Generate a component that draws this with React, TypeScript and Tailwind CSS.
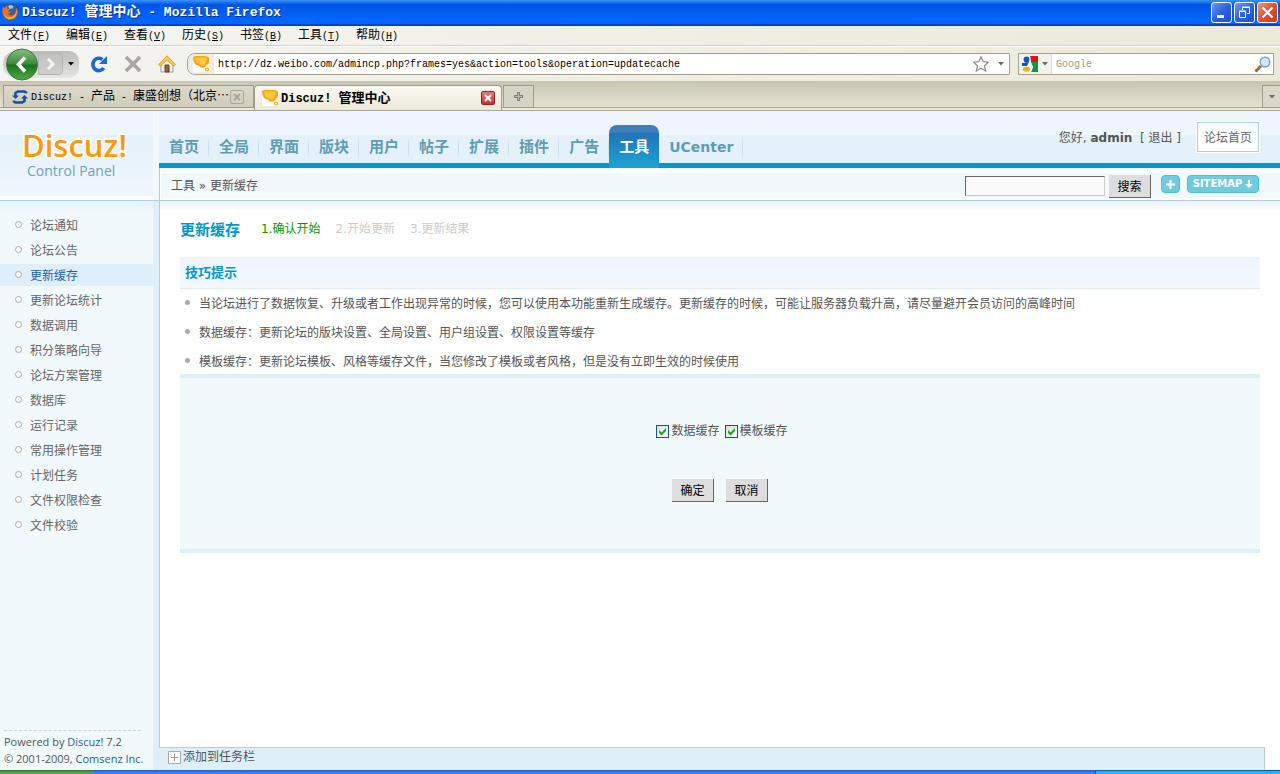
import { clsx } from 'clsx';

const menus = [
  ['文件', 'F'],
  ['编辑', 'E'],
  ['查看', 'V'],
  ['历史', 'S'],
  ['书签', 'B'],
  ['工具', 'T'],
  ['帮助', 'H'],
];

const navItems = ['首页', '全局', '界面', '版块', '用户', '帖子', '扩展', '插件', '广告', '工具', 'UCenter'];

const sideItems = [
  '论坛通知',
  '论坛公告',
  '更新缓存',
  '更新论坛统计',
  '数据调用',
  '积分策略向导',
  '论坛方案管理',
  '数据库',
  '运行记录',
  '常用操作管理',
  '计划任务',
  '文件权限检查',
  '文件校验',
];

const tips = [
  '当论坛进行了数据恢复、升级或者工作出现异常的时候，您可以使用本功能重新生成缓存。更新缓存的时候，可能让服务器负载升高，请尽量避开会员访问的高峰时间',
  '数据缓存：更新论坛的版块设置、全局设置、用户组设置、权限设置等缓存',
  '模板缓存：更新论坛模板、风格等缓存文件，当您修改了模板或者风格，但是没有立即生效的时候使用',
];

function FirefoxIcon() {
  return (
    <svg width="16" height="16" viewBox="0 0 16 16" className="shrink-0">
      <circle cx="8" cy="8" r="7.5" fill="#b8450a" />
      <circle cx="8.5" cy="6" r="5.500" fill="#35619f" />
      <path d="M6 2l3-1 2.500 1.500-1 2-3 .5z" fill="#9cc6e8" />
      <path d="M1 1.500c0 2-.7 4-.5 6.500C1 13 4.500 15.700 8 15.700c4.500 0 7.500-3.200 7.600-7.500 0-2-.6-3.700-1.600-5 .6 4-.5 7-3 8-2.500.8-4.500-.3-5-2 1.200.4 2 0 3-.8-1.600 0-2.600-.8-2.800-1.800.8-.3 1.800-.5 2-1.200C7.500 5 6 5 5.300 4.500 5 3.700 5.200 3 5.500 2.200 4 2.500 3.300 3 2.700 4 1.500 3.800 1.200 3 1 1.500z" fill="#ec7413" />
      <path d="M14 5c.8 5-2 8.500-6.500 8.500C5 13.500 3 12 2 10c1 3.500 3.500 5 6.500 4.800C13 14.500 15.500 10 14 5z" fill="#fbc62c" />
    </svg>
  );
}

// speech bubble favicon of the forum
function BubbleIcon() {
  return (
    <svg width="16" height="16" viewBox="0 0 16 16" className="shrink-0">
      <rect width="16" height="16" fill="#fff" />
      <path d="M0 1q2-1.500 4-1h8q3 0 4 1.500v4q0 2.500-2 3-1 3-4 3.200Q7 12 6 9.500 3 9.500 1.500 7 0 5 0 1z" fill="#fda60b" />
      <path d="M2 1.500h11.500q.8 3-1 5-1 3.500-3.500 3Q6.500 7 4.500 7 2 5 2 1.500z" fill="#ffc647" />
      <circle cx="14" cy="13.500" r="1.500" fill="#fff" stroke="#fda60b" strokeWidth="1.200" />
    </svg>
  );
}

function Caret({ className = 'text-[#6d6b66]' }: { className?: string }) {
  return (
    <svg width="6" height="4" viewBox="0 0 6 4" className={clsx('shrink-0', className)}>
      <path d="M0 0h6L3 3.500z" fill="currentColor" />
    </svg>
  );
}

function TitleBar() {
  return (
    <div className="flex h-[26px] items-center bg-linear-to-b from-[#3a93ff] via-[#0054e3] via-20% to-[#0066ff] to-80% pl-[2px] pr-[2px] border-b-2 border-[#0043cf]">
      <FirefoxIcon />
      <h1 className="ml-[4px] flex items-baseline font-['Liberation_Mono','Noto_Sans_CJK_SC',monospace] text-[13px] leading-5 font-bold whitespace-pre text-white [text-shadow:1px_1px_#0a2a8c]">
        Discuz! <span className="text-sm leading-5">管理中心</span> - Mozilla Firefox
      </h1>
      <div className="ml-auto flex gap-[2px]">
        <button aria-label="Minimize" className="flex size-[21px] items-center justify-center rounded-[3px] border border-white bg-linear-to-br from-[#6a9bf5] via-[#2b62e0] to-[#1a4fd0]">
          <svg width="15" height="15" viewBox="0 0 15 15">
            <path d="M3 10h7v3H3z" fill="#fff" />
          </svg>
        </button>
        <button aria-label="Restore" className="flex size-[21px] items-center justify-center rounded-[3px] border border-white bg-linear-to-br from-[#6a9bf5] via-[#2b62e0] to-[#1a4fd0]">
          <svg width="15" height="15" viewBox="0 0 15 15" fill="none" stroke="#fff">
            <path d="M5.500 5V2.500h7v6H10M5 2h8M2.500 6.500h6v6h-6zM2 6h7" />
          </svg>
        </button>
        <button aria-label="Close" className="flex size-[21px] items-center justify-center rounded-[3px] border border-white bg-linear-to-br from-[#f0907a] via-[#e0512f] to-[#c83a10]">
          <svg width="15" height="15" viewBox="0 0 15 15">
            <path d="M2.500 2.500l10 10M12.500 2.500l-10 10" stroke="#fff" strokeWidth="2" />
          </svg>
        </button>
      </div>
    </div>
  );
}

function MenuBar() {
  return (
    <nav className="flex h-[21px] items-start border-b border-white bg-linear-to-r from-[#f5f5f3] to-[#ece9d8] shadow-[inset_0_-1px_#d6d2bf]">
      {menus.map(([label, key]) => (
        <button key={key} className="flex w-[58px] items-baseline pl-2 text-xs leading-[18px] text-black">
          {label}
          <span className="font-['Liberation_Mono',monospace] text-[10px]">
            (<u>{key}</u>)
          </span>
        </button>
      ))}
    </nav>
  );
}

function ToolBar() {
  return (
    <div className="flex h-[34px] items-center bg-linear-to-r from-[#f4f4f1] to-[#ece9d8] pl-[3px] pr-[6px]">
      <div className="flex h-[27px] w-[76px] items-center rounded-l-[13px] rounded-r-[10px] bg-linear-to-b from-[#bdbdbb] to-[#e6e6e3]">
        <button aria-label="Back" className="shrink-0">
          <svg width="35" height="33" viewBox="0 0 35 33" className="-my-1">
            <defs>
              <linearGradient id="back" x1="0" y1="0" x2="0" y2="1">
                <stop offset="0" stopColor="#8bbd86" />
                <stop offset=".48" stopColor="#3d8a3b" />
                <stop offset=".52" stopColor="#1c6f1d" />
                <stop offset="1" stopColor="#4fae49" />
              </linearGradient>
            </defs>
            <circle cx="19" cy="16.500" r="15.500" fill="url(#back)" stroke="#3e7740" />
            <path d="M22 9.500l-6.500 7 6.500 7" fill="none" stroke="#fff" strokeWidth="3.500" />
          </svg>
        </button>
        <button aria-label="Forward" className="flex h-[22px] w-[25px] shrink-0 items-center justify-center rounded-r border border-[#b5b5b2] bg-linear-to-b from-[#c2c2bf] to-[#cfcfcc]">
          <svg width="10" height="12" viewBox="0 0 10 12">
            <path d="M2 1l5 5-5 5" fill="none" stroke="#f4f4f2" strokeWidth="3" />
          </svg>
        </button>
        <button aria-label="Recent pages" className="ml-[5px]">
          <Caret className="text-black" />
        </button>
      </div>
      <button aria-label="Reload" className="ml-[11px]">
        <svg width="18" height="18" viewBox="0 0 18 18">
          <path d="M13.800 13A6 6.200 0 1 1 12.500 4.500" fill="none" stroke="#1f66d6" strokeWidth="3.600" />
          <path d="M17 1v8H9z" fill="#1f66d6" />
        </svg>
      </button>
      <button aria-label="Stop" className="ml-4">
        <svg width="18" height="18" viewBox="0 0 18 18">
          <path d="M2 2l14 14M16 2L2 16" stroke="#a6a6a3" strokeWidth="3.600" />
        </svg>
      </button>
      <button aria-label="Home" className="ml-4">
        <svg width="18" height="18" viewBox="0 0 18 18">
          <path d="M3 9l6-6 6 6v8H3z" fill="#eef1f6" stroke="#9a9a98" />
          <path d="M7 10h4v7H7z" fill="#a0602c" stroke="#6b431f" />
          <path d="M9 .8L.6 9.500 2.200 11 9 5.200l6.800 5.800 1.600-1.500z" fill="#fdcb3e" stroke="#cf921c" strokeWidth=".8" />
        </svg>
      </button>
      <div className="ml-[11px] flex h-[22px] min-w-0 flex-1 items-center rounded-l-lg border border-[#a5a191] bg-white pr-[5px]">
        <span className="mr-1 flex h-full w-[26px] items-center justify-center rounded-l-lg bg-[#efeee6]">
          <BubbleIcon />
        </span>
        <input
          aria-label="Location"
          defaultValue="http://dz.weibo.com/admincp.php?frames=yes&action=tools&operation=updatecache"
          className="min-w-0 flex-1 bg-transparent font-['Liberation_Mono',monospace] text-[10px] text-black outline-none"
        />
        <button aria-label="Bookmark this page">
          <svg width="16" height="16" viewBox="0 0 16 16">
            <path d="M8 .8l2.200 4.900 5.200.5-3.900 3.500 1.200 5.300L8 12.300 3.300 15l1.200-5.300L.6 6.200l5.200-.5z" fill="#fff" stroke="#8d8d8b" strokeWidth="1.200" />
          </svg>
        </button>
        <button aria-label="Show history" className="ml-[9px]">
          <Caret />
        </button>
      </div>
      <div className="ml-2 flex h-[22px] w-[256px] items-center border border-[#a5a191] bg-white pr-[2px]">
        <button aria-label="Search engine" className="flex h-full w-[33px] items-center gap-1 border-r border-[#e1ded0] bg-[#f2f1ea] pl-[3px]">
          <svg width="16" height="16" viewBox="0 0 16 16" className="shrink-0">
            <path d="M8 0h8v6H9z" fill="#e11313" />
            <path d="M9 6h7v10H9l2-5z" fill="#109447" />
            <path d="M0 0h8l1 7 2 4-2 5H0z" fill="#fff" />
            <circle cx="4.500" cy="3.500" r="3" fill="#1555c0" />
            <path d="M0 7l7-1-2 4H0z" fill="#1555c0" />
            <ellipse cx="4.500" cy="13.200" rx="3.800" ry="2.500" fill="#f5ae14" />
          </svg>
          <Caret />
        </button>
        <input
          aria-label="Search the web"
          placeholder="Google"
          className="min-w-0 flex-1 pl-1 font-['Liberation_Mono',monospace] text-[10px] outline-none placeholder:text-[#9c9885]"
        />
        <button aria-label="Search">
          <svg width="17" height="17" viewBox="0 0 17 17">
            <path d="M7 10l-5.500 5.500" stroke="#b0622b" strokeWidth="2.800" />
            <circle cx="11" cy="6" r="4.800" fill="#cfe8fb" stroke="#7c9dc4" strokeWidth="1.400" />
          </svg>
        </button>
      </div>
    </div>
  );
}

function TabStrip() {
  return (
    <div className="flex h-[30px] border-b border-[#aca899] bg-linear-to-b from-[#c8c5b3] to-[#e8e5d6] pt-1 pl-[3px] shadow-[inset_0_-2px_#ece9d8,inset_0_-3px_#aca899]">
      <button className="flex h-[23px] w-[251px] items-center border border-[#a09d8c] bg-linear-to-b from-[#dcd9ca] to-[#d0cdbc] pl-2 text-xs text-black">
        <svg width="16" height="16" viewBox="0 0 16 16" className="shrink-0">
          <path d="M14 4.500V3.500L12.500 2.500H6L3.500 4v3" fill="none" stroke="#1650a5" strokeWidth="2.600" />
          <path d="M0 6.500h7L3.500 10z" fill="#1650a5" />
          <path d="M2 11.500v1l1.500 1H10l2.500-1.500V9" fill="none" stroke="#1650a5" strokeWidth="2.600" />
          <path d="M9 9.500h7L12.500 6z" fill="#1650a5" />
        </svg>
        <span className="ml-[3px] flex items-baseline font-['Noto_Sans_CJK_SC',sans-serif] leading-5 whitespace-pre">
          <span className="font-['Liberation_Mono',monospace] text-[10px]">Discuz! - </span>
          产品
          <span className="font-['Liberation_Mono',monospace] text-[10px]"> - </span>
          康盛创想（北京…
        </span>
        <span className="ml-px flex size-[14px] shrink-0 items-center justify-center rounded-xs border border-[#a9a79c]">
          <svg width="8" height="8" viewBox="0 0 8 8">
            <path d="M1 1l6 6M7 1L1 7" stroke="#a9a79c" strokeWidth="2" />
          </svg>
        </span>
      </button>
      <button className="flex h-[25px] w-[248px] items-center rounded-t border-x border-t border-[#a09d8c] bg-linear-to-b from-[#faf9f5] to-[#ece9d8] pr-[6px] pl-[7px] text-[13px] font-bold text-black">
        <BubbleIcon />
        <span className="ml-[3px] flex items-baseline whitespace-pre">
          <span className="font-['Liberation_Mono',monospace] text-xs">Discuz! </span>
          管理中心
        </span>
        <span className="ml-auto flex size-[14px] items-center justify-center rounded-xs border border-[#a02025] bg-linear-to-b from-[#e8777a] to-[#cb2b30]">
          <svg width="8" height="8" viewBox="0 0 8 8">
            <path d="M1 1l6 6M7 1L1 7" stroke="#fff" strokeWidth="2" />
          </svg>
        </span>
      </button>
      <button aria-label="New tab" className="ml-px flex h-[23px] w-[31px] items-center justify-center border border-[#a09d8c] bg-[#d7d4c5]">
        <svg width="9" height="9" viewBox="0 0 9 9">
          <path d="M4.500 0v9M0 4.500h9" stroke="#7f7f7c" strokeWidth="3" />
          <path d="M4.500 1v7M1 4.500h7" stroke="#b9b9b6" />
        </svg>
      </button>
      <button aria-label="List all tabs" className="ml-auto flex h-[23px] w-[18px] items-center justify-center border border-r-0 border-[#a09d8c] bg-[#dbd8c9]">
        <Caret />
      </button>
    </div>
  );
}

function Logo() {
  return (
    <div className="flex w-[153px] shrink-0 flex-col border-b-4 border-white bg-linear-to-b from-[#eef5fd] from-28% via-[#e5f1fb] via-28% to-[#f0f6fc]">
      <svg width="153" height="85" viewBox="0 0 153 85" role="img" aria-label="Discuz! Control Panel">
        <defs>
          <linearGradient id="orange" x1="0" y1="0" x2="0" y2="1">
            <stop offset="0" stopColor="#f7941d" />
            <stop offset="1" stopColor="#ff9c00" />
          </linearGradient>
        </defs>
        <text x="22" y="46" fontSize="31" fontWeight="600" fontFamily="'Open Sans',sans-serif" fill="url(#orange)" stroke="#fff" strokeWidth="3" paintOrder="stroke">
          Discuz!
        </text>
        <text x="27" y="65" fontSize="14" fontFamily="'Open Sans',sans-serif" fill="#6ea3b8">
          Control Panel
        </text>
      </svg>
    </div>
  );
}

function Header() {
  return (
    <header className="flex border-b border-[#b5cfd9] bg-[#f3f8fd]">
      <Logo />
      <div className="ml-[6px] flex min-w-0 flex-1 flex-col">
        <div className="flex h-[57px] bg-linear-to-b from-[#eef5fd] from-42% via-[#e4f1fb] via-42% to-[#e4f1fb] shadow-[inset_0_-5px_#0099cc]">
          <nav className="flex pt-[14px]">
            {navItems.map((item) => (
              <a
                key={item}
                href="#"
                className={clsx(
                  'flex h-[43px] items-center px-[10px] text-[15px] font-bold whitespace-nowrap',
                  item === '工具'
                    ? 'rounded-t-lg bg-linear-to-b from-[#3f7fb8] from-18% via-[#2273b5] via-18% to-[#1ba3d4] text-white'
                    : 'bg-[linear-gradient(to_bottom,transparent,#c3dbe6,transparent)] bg-[length:1px_24px] bg-[position:right_11px] bg-no-repeat text-[#5f9db4]',
                )}
              >
                {item === 'UCenter' ? <span className="font-['DejaVu_Sans',sans-serif] text-sm">{item}</span> : item}
              </a>
            ))}
          </nav>
          <div className="ml-auto flex items-start pt-[10px] pr-5 text-xs text-[#555]">
            <p className="mt-[9px] font-['DejaVu_Sans','Noto_Sans_CJK_SC',sans-serif] leading-4 whitespace-pre">
              您好, <strong>admin</strong>  [ <a href="#">退出</a> ]
            </p>
            <a href="#" className="ml-[15px] border border-white">
              <span className="block border border-[#b5cfd9] bg-linear-to-b from-[#f4f7fa] to-white to-60% px-[6px] pt-px leading-[27px] text-[#666]">论坛首页</span>
            </a>
          </div>
        </div>
        <div className="flex h-8 border-l border-[#b5cfd9] bg-white pt-[5px] pb-[2px] pl-px">
          <div className="flex flex-1 items-start bg-[#f2f9fd] pt-[2px] pr-[21px] pl-[10px] text-xs text-[#555]">
            <p className="font-['DejaVu_Sans','Noto_Sans_CJK_SC',sans-serif] leading-[22px]">工具 » 更新缓存</p>
            <input aria-label="搜索" className="mt-px ml-auto h-5 w-[140px] border border-t-[#666] border-r-[#ccc] border-b-[#ccc] border-l-[#666] bg-[#f9f9f9] px-1" />
            <button className="ml-1 h-[23px] w-[42px] border-r border-b border-[#666] bg-[#ddd] pt-px text-black">搜索</button>
            <button aria-label="添加" className="ml-[10px] flex h-[18px] w-[19px] items-center justify-center rounded-[4px] border border-[#4fc0dc] bg-[#6fccde]">
              <svg width="9" height="9" viewBox="0 0 9 9">
                <path d="M4.500 0v9M0 4.500h9" stroke="#fff" strokeWidth="2.200" />
              </svg>
            </button>
            <button className="ml-[7px] flex h-[18px] w-[72px] items-center justify-center gap-[3px] rounded-[4px] border border-[#4fc0dc] bg-[#6fccde] font-['DejaVu_Sans',sans-serif] text-[10px] font-bold text-white">
              SITEMAP
              <svg width="8" height="8" viewBox="0 0 8 8">
                <path d="M3 0h2v4h3L4 8 0 4h3z" fill="#fff" />
              </svg>
            </button>
          </div>
        </div>
      </div>
    </header>
  );
}

function Sidebar() {
  return (
    <aside className="flex w-[159px] shrink-0 flex-col border-r-[6px] border-[#deeffa] bg-linear-to-b from-[#e4f2fb] to-[#f2f9fd] to-[12px] pt-[13px]">
      <ul className="flex flex-col gap-[3px]">
        {sideItems.map((item) => (
          <li key={item}>
            <a
              href="#"
              className={clsx(
                'flex h-[22px] items-start gap-2 pl-[15px] text-xs leading-6',
                item === '更新缓存' ? 'bg-[#deeffa] text-[#1f5fa8]' : 'text-[#666]',
              )}
            >
              <span className="mt-[7px] size-[7px] rounded-full border border-[#aaa] bg-white" />
              {item}
            </a>
          </li>
        ))}
      </ul>
      <footer className="mt-auto pb-[3px] pl-1 font-['Open_Sans',sans-serif] text-[11px] leading-[17px] whitespace-nowrap text-[#555]">
        <div className="mr-3 border-t border-dashed border-[#ccd6da] pt-[2px]">
          <p>
            Powered by <a href="#" className="text-[#1f5fa8]">Discuz!</a> 7.2
          </p>
          <p>
            © 2001-2009, <a href="#" className="text-[#1f5fa8]">Comsenz Inc.</a>
          </p>
        </div>
      </footer>
    </aside>
  );
}

function CacheOption({ label }: { label: string }) {
  return (
    <label className="flex items-center gap-[2px]">
      <span className="grid size-[13px]">
        <input type="checkbox" defaultChecked className="peer col-start-1 row-start-1 size-[13px] appearance-none border border-[#1c5180] bg-linear-to-br from-[#dcdcd7] to-white" />
        <svg width="13" height="13" viewBox="0 0 13 13" className="pointer-events-none invisible col-start-1 row-start-1 peer-checked:visible">
          <path d="M3 5v3l2.500 2.500L10 6V3L5.500 7.500z" fill="#21a121" />
        </svg>
      </span>
      {label}
    </label>
  );
}

function Content() {
  return (
    <main className="flex-1 border-l border-[#b5cfd9] bg-linear-to-b from-[#e6f2fb] to-white to-[10px] px-5 pt-[18px] text-xs text-[#555]">
      <div className="flex h-5 items-center">
        <h2 className="text-[15px] font-bold text-[#0099cc]">更新缓存</h2>
        <ol className="ml-[21px] flex gap-[15px] font-['DejaVu_Sans','Noto_Sans_CJK_SC',sans-serif] text-[#ccc]">
          <li className="text-[#090]">1.确认开始</li>
          <li>2.开始更新</li>
          <li>3.更新结果</li>
        </ol>
      </div>
      <h3 className="mt-[18px] h-8 border-b border-dotted border-[#cfe6f5] bg-linear-to-b from-[#ecf4fd] to-[#f5f9fe] pl-[5px] text-[13px] leading-[31px] font-bold text-[#0099cc]">技巧提示</h3>
      <ul>
        {tips.map((tip, i) => (
          <li key={i} className="flex items-start py-[5px] pl-[5px] leading-[19px] last:pb-[3px]">
            <span className="mt-[6px] mr-[9px] size-[5px] shrink-0 rounded-full bg-[#aaa]" />
            {tip}
          </li>
        ))}
      </ul>
      <form className="flex flex-col items-center border-y-4 border-[#deeffa] bg-[#f2f9fd] pt-[44px] pb-[47px]" onSubmit={(e) => e.preventDefault()}>
        <div className="flex gap-[5px] pl-1 leading-[18px]">
          <CacheOption label="数据缓存" />
          <CacheOption label="模板缓存" />
        </div>
        <div className="mt-[39px] flex gap-3">
          <button type="submit" className="h-[23px] w-[42px] border-r border-b border-[#666] bg-[#ddd] pt-[2px] text-black">确定</button>
          <button type="button" className="h-[23px] w-[42px] border-r border-b border-[#666] bg-[#ddd] pt-[2px] text-black">取消</button>
        </div>
      </form>
    </main>
  );
}

export default function App() {
  return (
    <div className="flex min-h-screen flex-col bg-white font-['Noto_Sans','Noto_Sans_CJK_SC',sans-serif]">
      <TitleBar />
      <MenuBar />
      <ToolBar />
      <TabStrip />
      <div className="flex flex-1 flex-col">
        <Header />
        <div className="flex flex-1">
          <Sidebar />
          <div className="flex min-w-0 flex-1 flex-col">
            <Content />
            <div className="mr-[15px] flex h-[23px] items-start border-t border-r border-[#b5cfd9] bg-[#deeffa] pl-[9px]">
              <button className="flex items-center gap-[2px] text-xs leading-[18px] text-[#555]">
                <svg width="13" height="13" viewBox="0 0 13 13">
                  <path d="M.5.5h12v12H.5z" fill="#fff" stroke="#aaa" />
                  <path d="M6.500 3v7M3 6.500h7" stroke="#999" />
                </svg>
                添加到任务栏
              </button>
            </div>
          </div>
        </div>
      </div>
      {/* top edge of the system taskbar */}
      <div className="flex h-1 bg-linear-to-b from-[#245edb] to-[#3f8cf3]">
        <div className="w-[94px] rounded-tr bg-linear-to-b from-[#2f7d2f] to-[#5fb35f]" />
        <div className="ml-auto w-[185px] border-t border-l border-[#0c59b9] bg-[#19b9f3]" />
      </div>
    </div>
  );
}
